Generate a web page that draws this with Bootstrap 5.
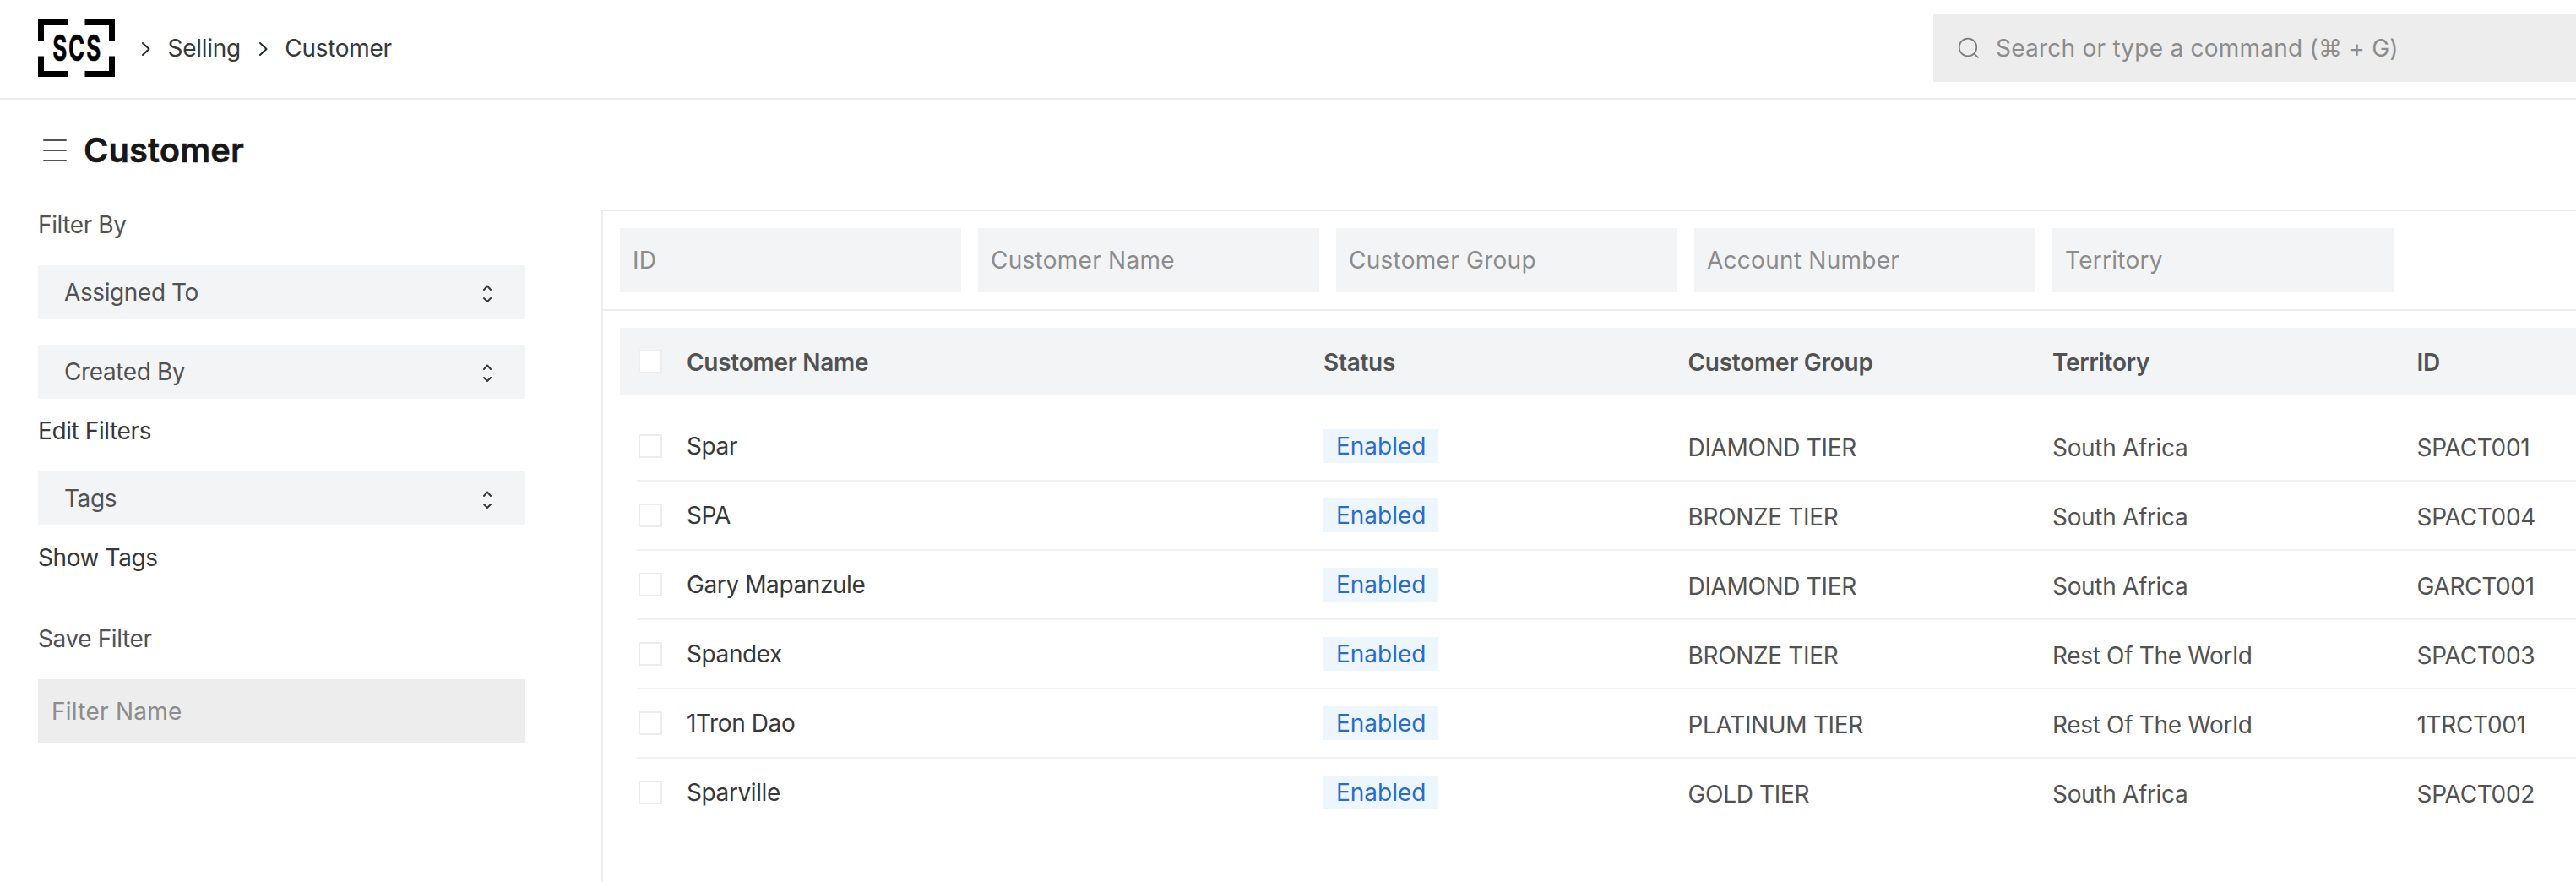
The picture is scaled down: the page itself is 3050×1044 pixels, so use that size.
<!DOCTYPE html>
<html lang="en">
<head>
<meta charset="utf-8">
<meta name="viewport" content="width=device-width, initial-scale=1">
<title>Customer</title>
<link href="https://cdn.jsdelivr.net/npm/bootstrap@5.3.0/dist/css/bootstrap.min.css" rel="stylesheet">
<style>
html,body{height:100%;overflow:hidden}
body{font-family:Inter,"Liberation Sans",sans-serif;font-size:28px;line-height:32px;letter-spacing:-.4px;color:#525252;background:#fff}
svg{display:block;flex:none}
.logo{overflow:visible}
.topbar{height:118px;padding:0 0 2px 45px;border-bottom:2px solid #ededed}
.crumbs{padding:2px 0 0 31px;color:#383838;letter-spacing:-.3px}
.crumbs a{color:inherit;margin-left:19.500px;padding-bottom:2px}
.crumbs a + svg{margin-left:21px}
.search-box{width:761px;height:80px;padding-left:29px;background:#ededed}
.search-box .form-control{padding:0 0 0 18px;letter-spacing:.24px}
.form-control{font-size:28px;line-height:32px;letter-spacing:.26px;color:#525252}
.form-control::placeholder{color:#8c8c8c;opacity:1}
.page-head{padding:34px 0 0 51px;height:122px}
.page-head h1{font-size:40px;line-height:48px;font-weight:600;letter-spacing:.05px;color:#171717;padding-left:20px;margin-top:2px;-webkit-text-stroke:.4px #171717}
.page-body{height:804px}
.side{width:712px;padding:10px 90px 0 45px;flex:none}
.side-label{margin-bottom:32px}
.side-btn{height:64px;padding:0 39px 1px 31px;background:#f3f4f6;color:#525252;font-size:28px;line-height:32px;letter-spacing:-.4px;border:0;border-radius:0}
.side-btn + .side-btn{margin-top:30px}
.side-link{color:#383838;text-decoration:none;display:block;line-height:32px;margin:22px 0 32px}
.side-link.last{margin-bottom:64px}
.field{height:76px;border:0;border-radius:0;padding:0 16px}
.field-gray{background:#ededed}
.field-light{background:#f3f4f6;width:404px;flex:none;padding-left:15px}
.list-pane{border-left:2px solid #ededed;border-top:2px solid #ededed;margin-top:8px;min-width:0}
.filter-row{height:118px;padding:20px 0 0 20px;gap:20px;border-bottom:2px solid #ededed}
.list-wrap{padding:20px 0 0 20px}
.cells{display:grid;grid-template-columns:57px 754px 431.5px 431.5px 431.5px 1fr;align-items:center;white-space:nowrap}
.head-cells{height:80px;padding-left:22px;background:#f3f4f6;font-weight:600;letter-spacing:-.27px}
.head-cells span{padding-top:1px}
.list-rows{padding:20px 0 0 20px}
.list-rows .cells{height:82px;padding-left:2px;border-bottom:2px solid #f1f1f1}
.list-rows .cells:last-child{border-bottom:0;padding-bottom:2px}
.row-name{color:#383838}
.nudge{padding-top:4px;letter-spacing:-.33px}
.form-check-input{width:28px;height:28px;margin:0;border:2px solid #ededed;border-radius:0!important;background-color:#fff}
.state{display:inline-block;vertical-align:top;height:40px;line-height:40px;width:136px;padding-left:15px;background:#edf6fd;color:#2b6cc9;letter-spacing:0}
</style>
</head>
<body>
<header class="topbar d-flex align-items-center justify-content-between">
  <div class="d-flex align-items-center">
    <svg class="logo" width="91" height="68" viewBox="0 0 91 68">
      <path d="M3.500 25V3.500H36M55.500 3.500H87.500V25M3.500 43.500V64.500H36M55.500 64.500H87.500V43.500" fill="none" stroke="#000" stroke-width="7"/>
      <text transform="translate(17.200 49.300) scale(.62 1)" font-family="Inter, sans-serif" font-weight="700" font-size="42" letter-spacing="3" stroke="#000" stroke-width=".5">SCS</text>
    </svg>
    <nav class="crumbs d-flex align-items-center">
      <svg width="12" height="18" viewBox="0 0 12 18"><path d="M2 2l7.500 7L2 16" fill="none" stroke="#1f2937" stroke-width="2" stroke-linecap="round" stroke-linejoin="round"/></svg>
      <a class="text-decoration-none">Selling</a>
      <svg width="12" height="18" viewBox="0 0 12 18"><path d="M2 2l7.500 7L2 16" fill="none" stroke="#1f2937" stroke-width="2" stroke-linecap="round" stroke-linejoin="round"/></svg>
      <a class="text-decoration-none">Customer</a>
    </nav>
  </div>
  <div class="search-box d-flex align-items-center">
    <svg width="27" height="27" viewBox="0 0 27 27"><circle cx="12" cy="12" r="10.300" fill="none" stroke="#7c7c7c" stroke-width="1.700"/><path d="M19.300 19.300L24.500 24.500" stroke="#7c7c7c" stroke-width="1.700"/></svg>
    <input class="form-control border-0 bg-transparent" placeholder="Search or type a command (⌘ + G)">
  </div>
</header>

<div class="page-head d-flex align-items-start">
  <svg class="mt-2" width="28" height="36" viewBox="0 0 28 36"><path d="M1 6H27M1 18H27M1 30H27" stroke="#525252" stroke-width="2" stroke-linecap="round"/></svg>
  <h1 class="mb-0">Customer</h1>
</div>

<div class="page-body d-flex">
  <aside class="side">
    <div class="side-label">Filter By</div>
    <button class="btn side-btn w-100 d-flex align-items-center justify-content-between">Assigned To
      <svg width="12" height="24" viewBox="0 0 12 24"><path d="M2 9L6 4.500L10 9M2 19L6 23L10 19" fill="none" stroke="#383838" stroke-width="2" stroke-linecap="round" stroke-linejoin="round"/></svg></button>
    <button class="btn side-btn w-100 d-flex align-items-center justify-content-between">Created By
      <svg width="12" height="24" viewBox="0 0 12 24"><path d="M2 9L6 4.500L10 9M2 19L6 23L10 19" fill="none" stroke="#383838" stroke-width="2" stroke-linecap="round" stroke-linejoin="round"/></svg></button>
    <a class="side-link">Edit Filters</a>
    <button class="btn side-btn w-100 d-flex align-items-center justify-content-between">Tags
      <svg width="12" height="24" viewBox="0 0 12 24"><path d="M2 9L6 4.500L10 9M2 19L6 23L10 19" fill="none" stroke="#383838" stroke-width="2" stroke-linecap="round" stroke-linejoin="round"/></svg></button>
    <a class="side-link last">Show Tags</a>
    <div class="side-label">Save Filter</div>
    <input class="form-control field field-gray" placeholder="Filter Name">
  </aside>

  <main class="list-pane flex-grow-1">
    <div class="filter-row d-flex">
      <input class="form-control field field-light" placeholder="ID">
      <input class="form-control field field-light" placeholder="Customer Name">
      <input class="form-control field field-light" placeholder="Customer Group">
      <input class="form-control field field-light" placeholder="Account Number">
      <input class="form-control field field-light" placeholder="Territory">
    </div>
    <div class="list-wrap">
      <div class="cells head-cells"><input type="checkbox" class="form-check-input"><span>Customer Name</span><span>Status</span><span>Customer Group</span><span>Territory</span><span>ID</span></div>
      <div class="list-rows">
        <div class="cells"><input type="checkbox" class="form-check-input"><span class="row-name">Spar</span><span><span class="state">Enabled</span></span><span class="nudge">DIAMOND TIER</span><span class="nudge">South Africa</span><span class="nudge">SPACT001</span></div>
        <div class="cells"><input type="checkbox" class="form-check-input"><span class="row-name">SPA</span><span><span class="state">Enabled</span></span><span class="nudge">BRONZE TIER</span><span class="nudge">South Africa</span><span class="nudge">SPACT004</span></div>
        <div class="cells"><input type="checkbox" class="form-check-input"><span class="row-name">Gary Mapanzule</span><span><span class="state">Enabled</span></span><span class="nudge">DIAMOND TIER</span><span class="nudge">South Africa</span><span class="nudge">GARCT001</span></div>
        <div class="cells"><input type="checkbox" class="form-check-input"><span class="row-name">Spandex</span><span><span class="state">Enabled</span></span><span class="nudge">BRONZE TIER</span><span class="nudge">Rest Of The World</span><span class="nudge">SPACT003</span></div>
        <div class="cells"><input type="checkbox" class="form-check-input"><span class="row-name">1Tron Dao</span><span><span class="state">Enabled</span></span><span class="nudge">PLATINUM TIER</span><span class="nudge">Rest Of The World</span><span class="nudge">1TRCT001</span></div>
        <div class="cells"><input type="checkbox" class="form-check-input"><span class="row-name">Sparville</span><span><span class="state">Enabled</span></span><span class="nudge">GOLD TIER</span><span class="nudge">South Africa</span><span class="nudge">SPACT002</span></div>
      </div>
    </div>
  </main>
</div>
<script src="https://cdn.jsdelivr.net/npm/bootstrap@5.3.0/dist/js/bootstrap.bundle.min.js"></script>
</body>
</html>
